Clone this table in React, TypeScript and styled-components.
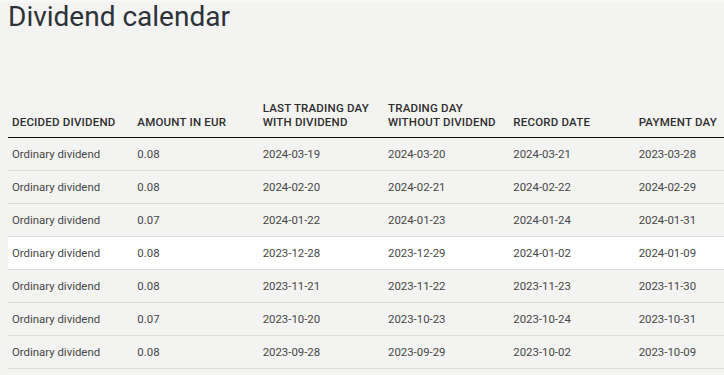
import styled, { createGlobalStyle } from 'styled-components';

const GlobalStyle = createGlobalStyle`
    html, body {
        margin: 0;
        background: #f3f3f1;
        overflow: hidden;
    }
    body {
        font-family: Roboto, "Liberation Sans", Arial, sans-serif;
        color: #3a3a3a;
    }
`;

const Page = styled.div`
    width: 724px;
    height: 375px;
    overflow: hidden;
    padding: 0 0 0 8px;
    box-sizing: border-box;
    background: linear-gradient(#fafafa, #f3f3f1 3px);
`;

const Title = styled.h1`
    margin: 0;
    padding-top: 1px;
    font-size: 28px;
    line-height: 32px;
    font-weight: 400;
    color: #2c3238;
`;

const Table = styled.table`
    margin-top: 68px;
    border-collapse: collapse;
    table-layout: fixed;
    width: 752px;
`;

const HeadCell = styled.th`
    width: 117.3px;
    padding: 0 4px 8px 4px;
    text-align: left;
    vertical-align: bottom;
    font-size: 11.5px;
    line-height: 14px;
    font-weight: 500;
    letter-spacing: 0.2px;
    text-transform: uppercase;
    color: #2e2e2e;
    border-bottom: 1px solid #111;
`;

const Row = styled.tr<{ $active?: boolean }>`
    background: ${p => (p.$active ? '#ffffff' : 'transparent')};
    border-bottom: 1px solid #dcdcda;
`;

const Cell = styled.td`
    height: 32px;
    padding: 0 4px;
    font-size: 11.4px;
    color: #474747;
    white-space: nowrap;
`;

const headers = [
    ['Decided dividend'],
    ['Amount in EUR'],
    ['Last trading day', 'with dividend'],
    ['Trading day', 'without dividend'],
    ['Record date'],
    ['Payment day'],
];

const rows = [
    ['0.08', '2024-03-19', '2024-03-20', '2024-03-21', '2023-03-28'],
    ['0.08', '2024-02-20', '2024-02-21', '2024-02-22', '2024-02-29'],
    ['0.07', '2024-01-22', '2024-01-23', '2024-01-24', '2024-01-31'],
    ['0.08', '2023-12-28', '2023-12-29', '2024-01-02', '2024-01-09'],
    ['0.08', '2023-11-21', '2023-11-22', '2023-11-23', '2023-11-30'],
    ['0.07', '2023-10-20', '2023-10-23', '2023-10-24', '2023-10-31'],
    ['0.08', '2023-09-28', '2023-09-29', '2023-10-02', '2023-10-09'],
];

const App = () => {
    return <>
        <GlobalStyle />
        <Page>
            <Title>Dividend calendar</Title>
            <Table>
                <thead>
                    <tr>
                        {headers.map(h => (
                            <HeadCell key={h[0]}>
                                {h.map((line, k) => <span key={k}>{k > 0 && <br />}{line}</span>)}
                            </HeadCell>
                        ))}
                    </tr>
                </thead>
                <tbody>
                    {rows.map((r, i) => (
                        <Row key={i} $active={i === 3}>
                            <Cell>Ordinary dividend</Cell>
                            {r.map((v, j) => <Cell key={j}>{v}</Cell>)}
                        </Row>
                    ))}
                </tbody>
            </Table>
        </Page>
    </>
}

export default App;
